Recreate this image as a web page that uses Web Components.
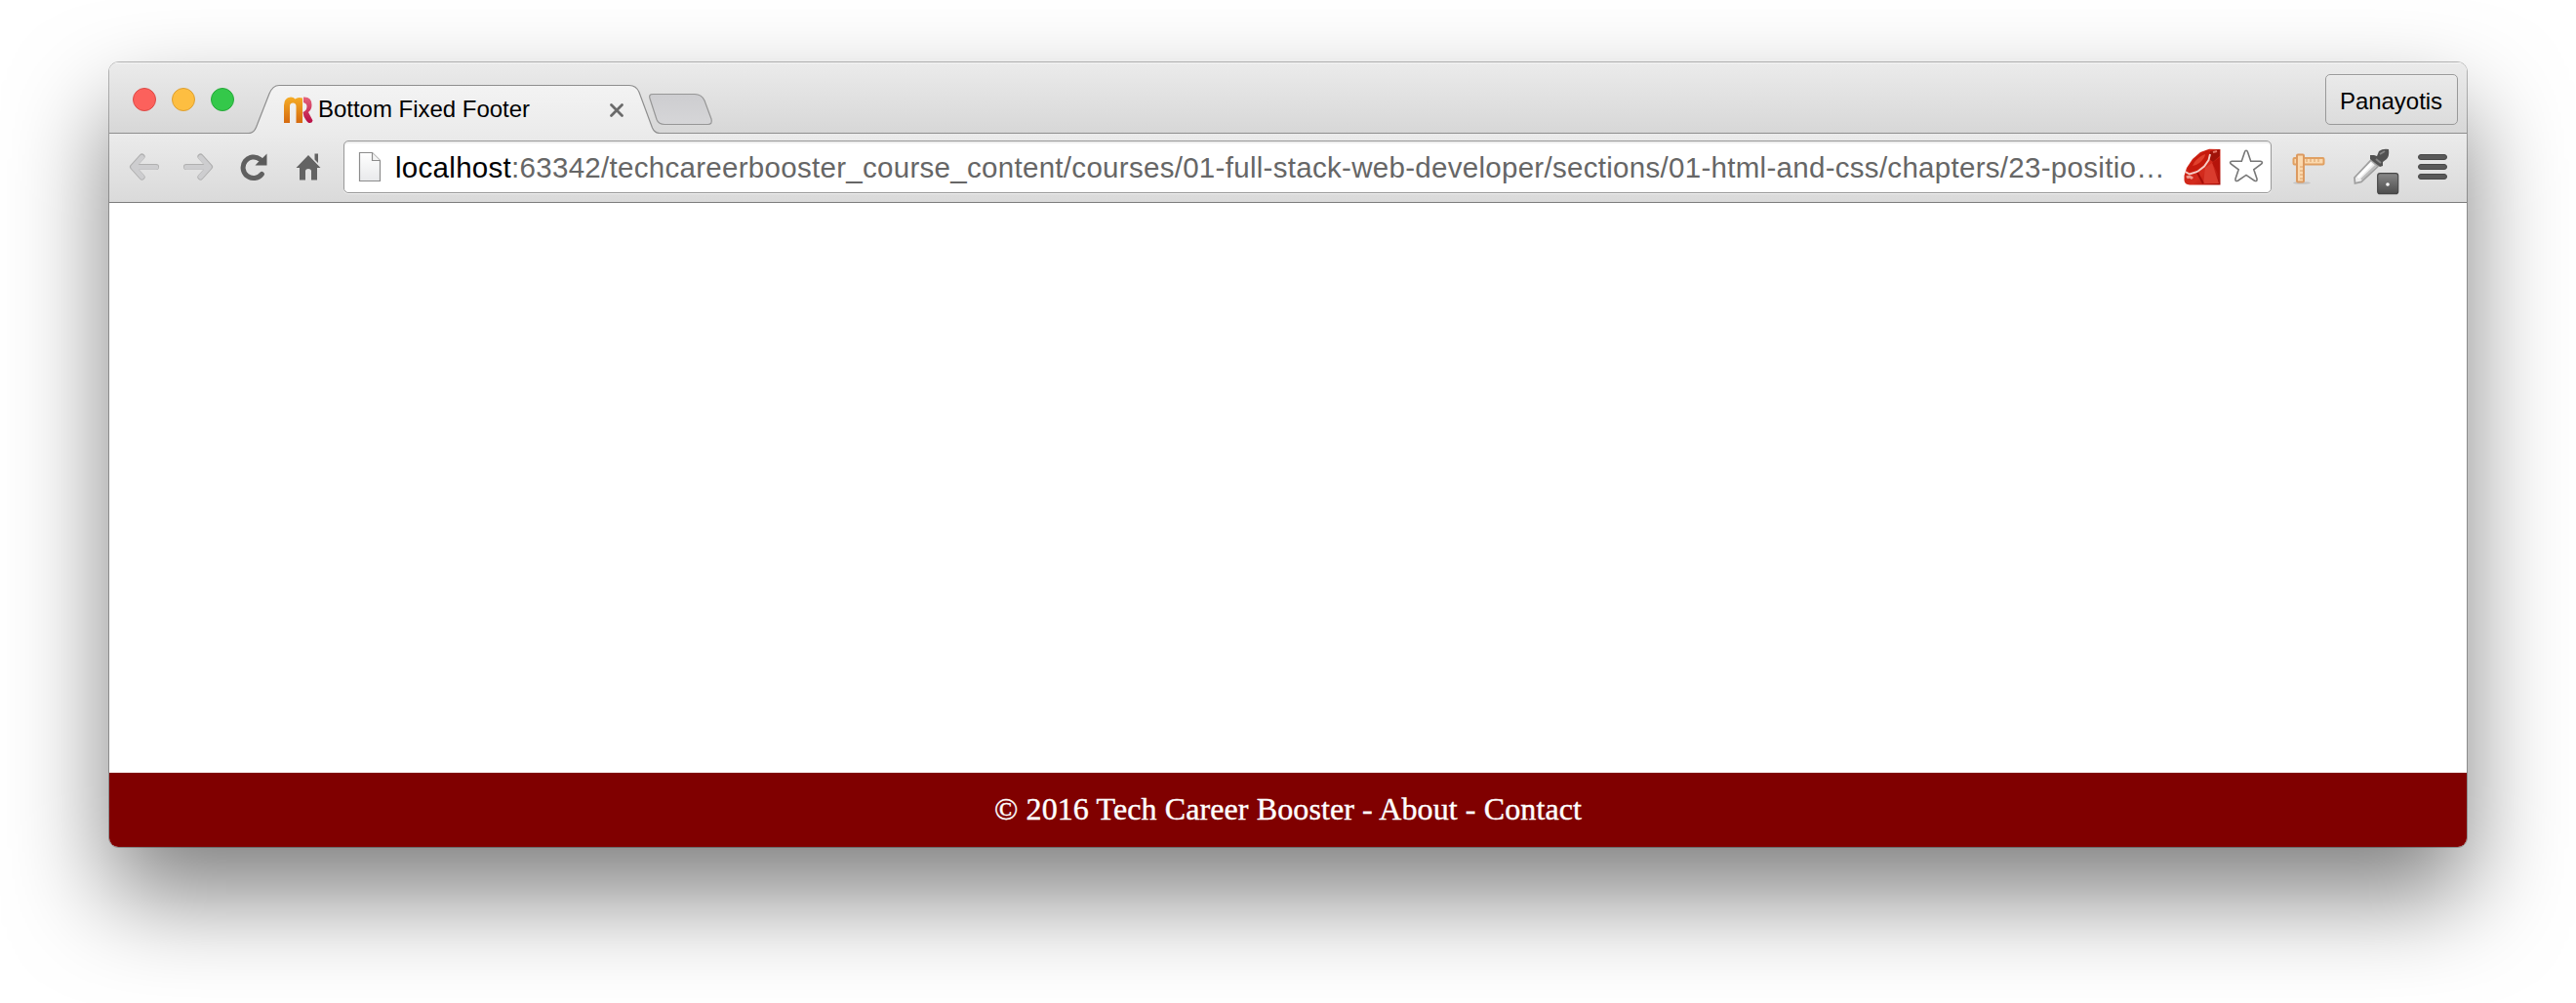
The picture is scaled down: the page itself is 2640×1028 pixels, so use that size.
<!DOCTYPE html>
<html lang="en">
<head>
<meta charset="utf-8">
<title>Bottom Fixed Footer</title>
<style>
html,body{margin:0;background:#fff}
body{box-sizing:border-box;width:2640px;height:1028px;padding:64px 112px 160px;overflow:hidden;display:flex;font-family:"Liberation Sans",Arial,sans-serif}
</style>
</head>
<body>
<browser-window>
  <tab-strip slot="strip">
    <browser-tab><fit-text width="217">Bottom Fixed Footer</fit-text></browser-tab>
    <user-button slot="user"><fit-text width="105">Panayotis</fit-text></user-button>
  </tab-strip>
  <tool-bar slot="toolbar">
    <address-bar><span slot="host">localhost</span>:63342/techcareerbooster_course_content/courses/01-full-stack-web-developer/sections/01-html-and-css/chapters/23-positio…</address-bar>
  </tool-bar>
  <page-footer slot="footer"><fit-text width="602">© 2016 Tech Career Booster - About - Contact</fit-text></page-footer>
</browser-window>
<script>
const define = (name, html, ready) => {
  const t = document.createElement('template');
  t.innerHTML = html;
  customElements.define(name, class extends HTMLElement {
    constructor(){ super(); this.attachShadow({mode:'open'}).append(t.content.cloneNode(true)); }
    connectedCallback(){ if (ready) ready(this); }
  });
};

const icons = {
  back:[32,30,`<g fill="none" stroke-linecap="round" stroke-linejoin="round"><path d="M28 15H5M13.500 4.500L4 15l9.500 10.500" stroke="#b0b0b0" stroke-width="6.200"/><path d="M28 15.400H5.500M13.500 5.200L4.500 15.200l9 10" stroke="#cdcdcf" stroke-width="4.800"/></g>`],
  forward:[32,30,`<g fill="none" stroke-linecap="round" stroke-linejoin="round"><path d="M4 15h23M18.500 4.500L28 15l-9.500 10.500" stroke="#b0b0b0" stroke-width="6.200"/><path d="M4 15.400h22.500M18.500 5.200l9 10-9 10" stroke="#cdcdcf" stroke-width="4.800"/></g>`],
  reload:[30,30,`<path d="M21.500 7.200A10.800 10.800 0 1 0 23.400 22.400" fill="none" stroke="#606060" stroke-width="5" stroke-linecap="round"/><path d="M28.500 1.500V13.500H16.500L20 9.800 24 6Z" fill="#5b5b5b"/>`],
  home:[28,30,`<path d="M14 3L26.500 16H23V28.500H17V19.500Q17 17 14 17T11 19.500V28.500H5V16H1.500Z M20.500 1.500H24V11L20.500 7.500Z" fill="#636363"/>`],
  page:[24,32,`<defs><linearGradient id="g" x2="0" y2="1"><stop stop-color="#fff"/><stop offset="1" stop-color="#e8e9eb"/></linearGradient></defs><path d="M1.500 1.500H14.500L22.500 9.500V30.500H1.500Z" fill="url(#g)" stroke="#8c8c8c" stroke-width="1.200"/><path d="M14.500 1.500V9.500H22.500" fill="#f4f4f4" stroke="#8c8c8c" stroke-width="1.200"/>`],
  ruby:[38,38,`<defs><linearGradient id="g" x2="1" y2="1"><stop stop-color="#c9190c"/><stop offset=".6" stop-color="#d32b1d"/><stop offset="1" stop-color="#a50d08"/></linearGradient></defs><path d="M37.500 1V37.500H6Q1 37 .5 33V28L3 20 9 11 17 4 26 .8Z" fill="url(#g)"/><path d="M4 21Q11 8 24 2L29 5Q25 13 18 19 11 25 5 24Z" fill="#c61a0d"/><path d="M11 14Q16 8 22 6Q22 10 16 15 12 18 9 18Z" fill="#e0402c"/><path d="M27 3 37 1V8L30 14 26 11Z" fill="#9f1209"/><path d="M30 4l4-1" stroke="#e6776a" stroke-width="2"/><path d="M29 15 37 9V30Z" fill="#b5140b"/><path d="M22 20 29 15 36 36 20 36Z" fill="#da3c2e"/><path d="M1.500 24 6 26.500 14 24 21 18.500 25.500 12 27 6" fill="none" stroke="#f6cdc6" stroke-width="1.900"/><path d="M14 25 20 36" stroke="#a70e08" stroke-width="2"/><path d="M3 30Q6 28 9 31" fill="none" stroke="#ef9a8f" stroke-width="3"/>`],
  star:[36,36,`<path d="M18 2.200Q19 2.200 19.600 4L22.700 13.200 32.600 13.300Q35.500 13.900 33.700 16L25.800 21.800 29 31.300Q29.400 34.300 26.500 33.200L18 27.400 9.500 33.200Q6.600 34.300 7 31.300L10.200 21.800 2.300 16Q.5 13.900 3.400 13.300L13.300 13.200 16.400 4Q17 2.200 18 2.200Z" fill="#fff" stroke="#777" stroke-width="1.600"/>`],
  ruler:[34,34,`<ellipse cx="10" cy="31.500" rx="9" ry="1.300" fill="#c4c4c4"/><rect x="1.500" y="6" width="31" height="6.500" rx="1" fill="#fbd9ae" stroke="#e0a062" stroke-width="2"/><path d="M15 7v3M19 7v3M23 7v3M27 7v3" stroke="#dca068"/><rect x="5" y="2.500" width="7" height="28" rx="1" fill="#fbd9ae" stroke="#dc9a60" stroke-width="2"/><path d="M8 15h3M8 19h3M8 23h3M8 27h3" stroke="#dca068"/>`],
  dropper:[48,50,`<defs><linearGradient id="g" x2="0" y2="1"><stop stop-color="#888"/><stop offset="1" stop-color="#4c4c4c"/></linearGradient></defs><path d="M19 13 26 19.500 9 35.500 2.500 37 2 31Z" fill="#ececec" stroke="#a0a0a0" stroke-width="1.800"/><path d="M19.500 16.500 5.500 31" stroke="#fff" stroke-width="3"/><path d="M24 18.500 9 33" stroke="#bcbcbc" stroke-width="2"/><path d="M18 8 22 8 25 9 27 4Q31 1 37 2 38 9 35 12L31 15 31 19 28 20 18 12Z" fill="#525252"/><path d="M28 7l5-3M24 12l5 4" stroke="#858585" stroke-width="2"/><rect x="25.700" y="26.700" width="21" height="21" rx="2.500" fill="url(#g)" stroke="#474747" stroke-width="1.200"/><circle cx="36" cy="38" r="1.800" fill="#fff"/>`],
  menu:[30,28,`<g fill="#595959" stroke="#474747"><rect x=".5" y="1.500" width="29" height="5" rx="2.500"/><rect x=".5" y="11.500" width="29" height="5" rx="2.500"/><rect x=".5" y="21.500" width="29" height="5" rx="2.500"/></g>`],
  favicon:[31,28,`<defs><linearGradient id="g" x2="0" y2="1"><stop stop-color="#f5ac25"/><stop offset="1" stop-color="#d56a10"/></linearGradient><linearGradient id="h" x2="0" y2="1"><stop stop-color="#e5657c"/><stop offset="1" stop-color="#b80d45"/></linearGradient></defs><path d="M1 27V9Q1 1 8 .5 11 .5 12.500 2.500 15 0 20 1.500V27H13.500V10Q13.500 6.500 10.200 6.500T7 10V27Z" fill="url(#g)"/><path d="M21 .5Q29.500 0 29.500 8.500 29.500 13.500 26 16L30.500 24.500Q30 27.500 26.500 27 24.500 26 21.500 20.500L20.500 16Q24.500 14.500 24.500 10 24.500 7 21 6Z" fill="url(#h)"/>`],
  close:[16,16,`<path d="M2.500 2.500 13.500 13.500M13.500 2.500 2.500 13.500" stroke="#6a6a6a" stroke-width="2.800" stroke-linecap="round"/>`]
};

define('glyph-icon', `<style>:host{display:block;flex:none}svg{display:block}</style><span></span>`, el => {
  const [w,h,body] = icons[el.getAttribute('name')];
  el.shadowRoot.querySelector('span').innerHTML = `<svg width="${w}" height="${h}" viewBox="0 0 ${w} ${h}">${body}</svg>`;
});

/* Spreads its text over a given advance width by adjusting the tracking. */
const fit = (node, width, count) => {
  node.style.letterSpacing = '0px';
  node.style.letterSpacing = (width - node.getBoundingClientRect().width) / count + 'px';
};
define('fit-text', `<style>:host{display:block;white-space:nowrap}span{display:inline-block}</style><span><slot></slot></span>`, el => {
  requestAnimationFrame(() => fit(el.shadowRoot.querySelector('span'), +el.getAttribute('width'), el.textContent.length));
});

define('window-lights', `<style>
:host{display:flex;gap:16px;flex:none}
i{width:24px;height:24px;border-radius:50%;box-sizing:border-box;border:1px solid}
.r{background:#fc615c;border-color:#dc4a46}.y{background:#fdbe41;border-color:#dd9f31}.g{background:#34c84a;border-color:#26a939}
</style><i class="r"></i><i class="y"></i><i class="g"></i>`);

define('browser-tab', `<style>
:host{display:grid;width:430px;height:73px;flex:none}
svg,.row{grid-area:1/1}
.row{display:flex;align-items:center;padding:24px 42px 0 38px;z-index:1;font-size:24px;color:#000}
.title{margin:-2px 0 0 5px;flex:1}
</style>
<svg width="430" height="73"><defs><linearGradient id="t" x2="0" y2="1"><stop stop-color="#f3f3f3"/><stop offset="1" stop-color="#ebebeb"/></linearGradient></defs>
<path d="M0 73V72.500H3Q8 72.500 10.500 66.500L24 32Q27.500 23.500 34 23.500H393Q400 23.500 403 30.500L416.500 67Q419 72.500 424 72.500H430V73Z" fill="url(#t)"/>
<path d="M6 72.500H422" stroke="#ebebeb"/>
<path d="M0 72.500H3Q8 72.500 10.500 66.500L24 32Q27.500 23.500 34 23.500H393Q400 23.500 403 30.500L416.500 67Q419 72.500 424 72.500H430" fill="none" stroke="#8e8e8e" stroke-width="1.200"/></svg>
<div class="row"><glyph-icon name="favicon"></glyph-icon><div class="title"><slot></slot></div><glyph-icon name="close"></glyph-icon></div>`);

define('new-tab', `<style>:host{display:block;flex:none;margin:31px 0 0 -18px}svg{display:block}</style>
<svg width="67" height="35"><defs><linearGradient id="n" x2="0" y2="1"><stop stop-color="#cdcdd0"/><stop offset="1" stop-color="#d6d6d8"/></linearGradient></defs><path d="M5 1.500H48Q55 1.500 58 8L65 27Q66.500 32.500 61.500 32.500H17Q11 32.500 9 27.500L2 6Q.5 1.500 5 1.500Z" fill="url(#n)" stroke="#969696" stroke-width="1.200"/></svg>`);

define('user-button', `<style>
:host{display:flex;align-items:center;justify-content:center;box-sizing:border-box;width:136px;height:52px;border:1px solid #999;border-radius:5px;background:linear-gradient(#eaeaea,#dcdcdc);box-shadow:inset 0 1px #f2f2f2;font-size:24px;color:#000;padding:3px 1px 0 0}
</style><slot></slot>`);

define('tab-strip', `<style>
:host{display:flex;height:73px;box-sizing:border-box;background:linear-gradient(#8e8e8e,#8e8e8e) 0 100%/100% 1px no-repeat,linear-gradient(#ebebeb,#d7d7d7);box-shadow:inset 0 1px #f5f5f5}
window-lights{margin:26px 12px 0 24px}
.user{margin:12px 9px 0 auto}
</style><window-lights></window-lights><slot></slot><new-tab></new-tab><div class="user"><slot name="user"></slot></div>`);

define('address-bar', `<style>
:host{display:flex;align-items:center;box-sizing:border-box;width:1976px;height:54px;flex:none;background:#fff;border:1px solid #999;border-radius:5px;box-shadow:inset 0 2px 1px #eee,0 1px #efefef;padding:0 7px 0 14px}
.url{margin:1px 0 0 14px;width:1818px;font-size:29.500px;white-space:nowrap;color:#666}
.text{display:inline-block}
::slotted(span){color:#000}
glyph-icon[name=star]{margin:0 0 2px 8px}
glyph-icon[name=ruby]{margin:0 0 0 auto}
</style><glyph-icon name="page"></glyph-icon><div class="url"><span class="text"><slot name="host"></slot><slot></slot></span></div><glyph-icon name="ruby"></glyph-icon><glyph-icon name="star"></glyph-icon>`, el => {
  requestAnimationFrame(() => fit(el.shadowRoot.querySelector('.text'), 1814, el.textContent.trim().length));
});

define('tool-bar', `<style>
:host{display:flex;align-items:flex-start;height:71px;box-sizing:border-box;padding:7px 19px 0 20px;border-bottom:1px solid #7d7d7d;background:linear-gradient(#ebebeb,#dadada)}
.nav{display:flex;width:220px;padding-top:12px}
.nav glyph-icon+glyph-icon{margin-left:23px}
.nav glyph-icon:nth-child(3){margin-left:26px}
.nav glyph-icon:nth-child(4){margin-left:27px}
[name=ruler]{margin:12px 0 0 21px}[name=dropper]{margin:7px 0 0 28px}[name=menu]{margin:13px 0 0 19px}
</style><div class="nav"><glyph-icon name="back"></glyph-icon><glyph-icon name="forward"></glyph-icon><glyph-icon name="reload"></glyph-icon><glyph-icon name="home"></glyph-icon></div><slot></slot><glyph-icon name="ruler"></glyph-icon><glyph-icon name="dropper"></glyph-icon><glyph-icon name="menu"></glyph-icon>`);

define('page-footer', `<style>
:host{display:flex;align-items:center;justify-content:center;box-sizing:border-box;height:76px;padding-bottom:2px;background:#800000;color:#fff;font:32px "Liberation Serif","Times New Roman",serif;-webkit-text-stroke:.4px #fff}
</style><slot></slot>`);

define('browser-window', `<style>
:host{display:flex;flex-direction:column;width:2416px;height:804px;border-radius:10px;box-shadow:0 0 0 1px rgba(0,0,0,.27),0 50px 100px rgba(0,0,0,.5)}
.frame{display:flex;flex-direction:column;flex:1;border-radius:9px;overflow:hidden;background:#fff}
main{flex:1}
</style><div class="frame"><slot name="strip"></slot><slot name="toolbar"></slot><main></main><slot name="footer"></slot></div>`);
</script>
</body>
</html>
